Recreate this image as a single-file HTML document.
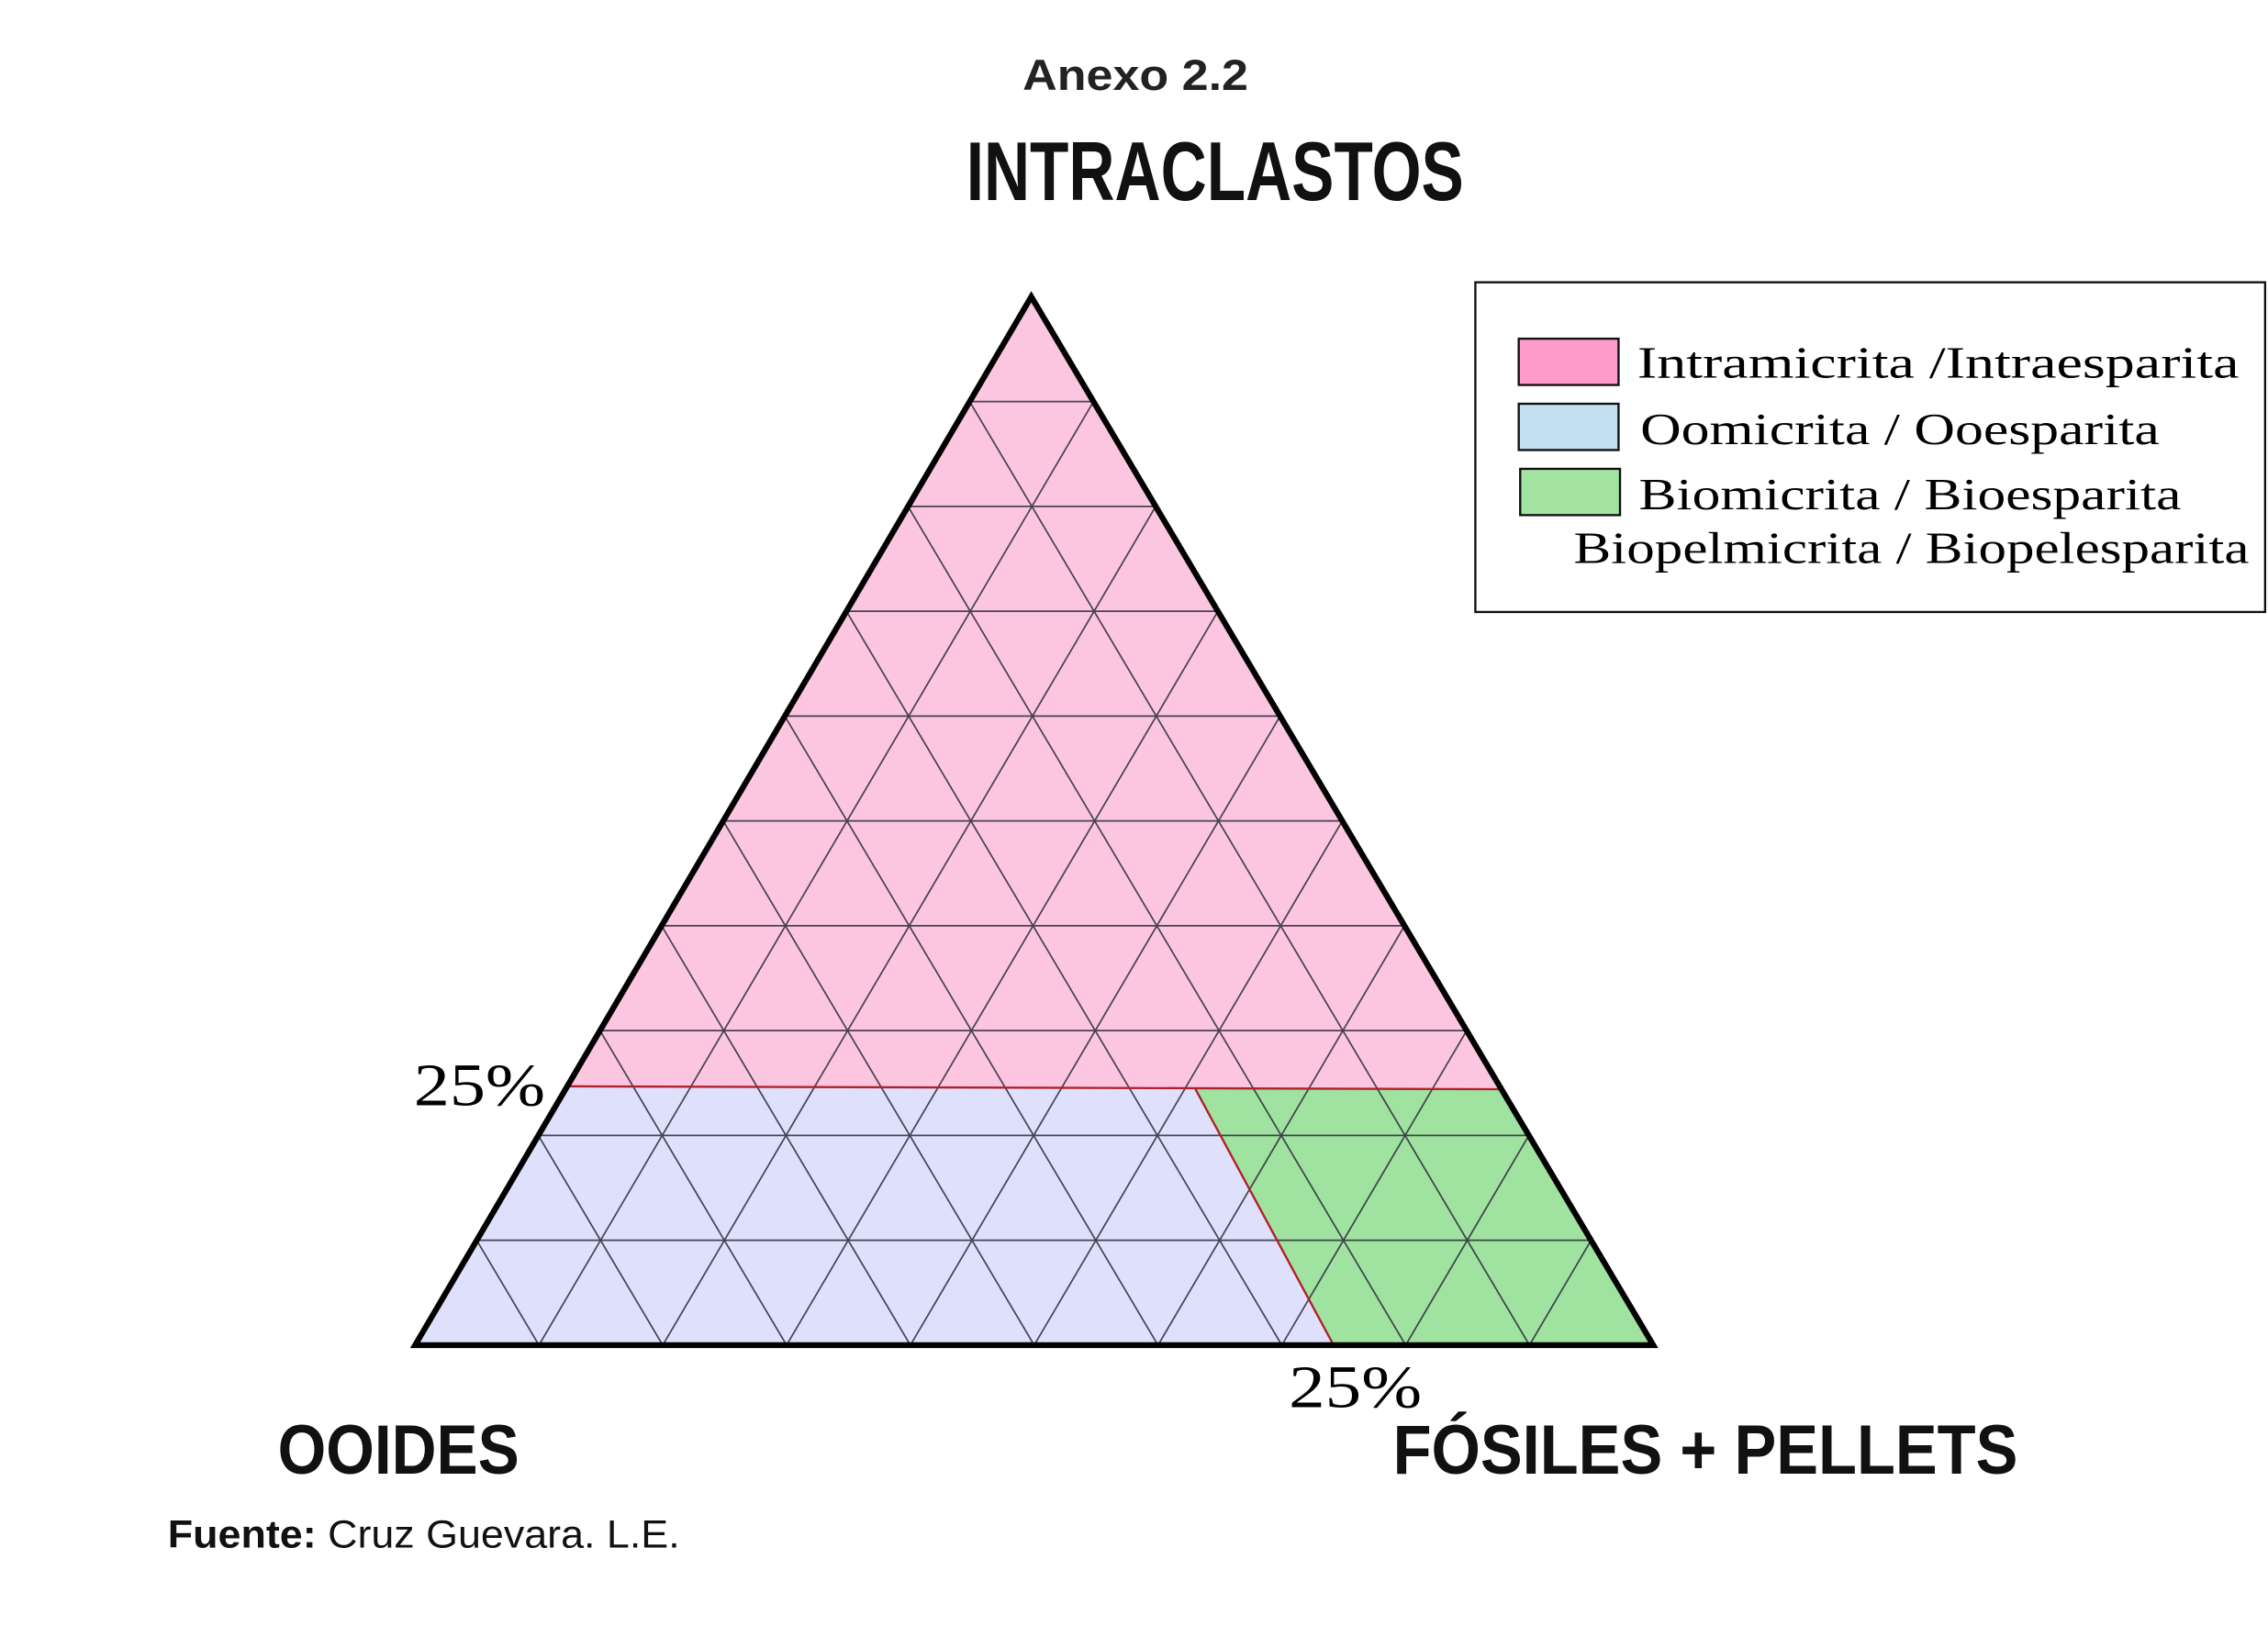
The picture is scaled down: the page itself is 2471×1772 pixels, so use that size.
<!DOCTYPE html>
<html><head><meta charset="utf-8"><style>html,body{margin:0;padding:0;background:#fff}svg{display:block}</style></head>
<body>
<svg width="2471" height="1772" viewBox="0 0 1568 1124" xmlns="http://www.w3.org/2000/svg">
<rect width="1568" height="1124" fill="#fff"/>
<text x="785" y="62" text-anchor="middle" font-family="Liberation Sans, sans-serif" font-weight="bold" font-size="30" fill="#222" textLength="156" lengthAdjust="spacingAndGlyphs">Anexo 2.2</text>
<text x="668" y="138" font-family="Liberation Sans, sans-serif" font-weight="bold" font-size="58" fill="#111" textLength="344" lengthAdjust="spacingAndGlyphs">INTRACLASTOS</text>
<polygon points="713,205 392,751 1036,753" fill="#fcc6e1"/>
<polygon points="392,751 826,752 922,930 287,930" fill="#dfe0fb"/>
<polygon points="826,752 1036,753 1143,930 922,930" fill="#a0e2a0"/>
<g stroke="#2a2a3a" stroke-width="1.1" opacity="0.85">
<line x1="329.6" y1="857.5" x2="1100" y2="857.5"/>
<line x1="372.2" y1="785" x2="1057" y2="785"/>
<line x1="414.8" y1="712.5" x2="1014" y2="712.5"/>
<line x1="457.4" y1="640" x2="971" y2="640"/>
<line x1="500" y1="567.5" x2="928" y2="567.5"/>
<line x1="542.6" y1="495" x2="885" y2="495"/>
<line x1="585.2" y1="422.5" x2="842" y2="422.5"/>
<line x1="627.8" y1="350" x2="799" y2="350"/>
<line x1="670.4" y1="277.5" x2="756" y2="277.5"/>
<line x1="372.6" y1="930" x2="329.6" y2="857.5"/>
<line x1="458.2" y1="930" x2="372.2" y2="785"/>
<line x1="543.8" y1="930" x2="414.8" y2="712.5"/>
<line x1="629.4" y1="930" x2="457.4" y2="640"/>
<line x1="715" y1="930" x2="500" y2="567.5"/>
<line x1="800.6" y1="930" x2="542.6" y2="495"/>
<line x1="886.2" y1="930" x2="585.2" y2="422.5"/>
<line x1="971.8" y1="930" x2="627.8" y2="350"/>
<line x1="1057.4" y1="930" x2="670.4" y2="277.5"/>
<line x1="372.6" y1="930" x2="756" y2="277.5"/>
<line x1="458.2" y1="930" x2="799" y2="350"/>
<line x1="543.8" y1="930" x2="842" y2="422.5"/>
<line x1="629.4" y1="930" x2="885" y2="495"/>
<line x1="715" y1="930" x2="928" y2="567.5"/>
<line x1="800.6" y1="930" x2="971" y2="640"/>
<line x1="886.2" y1="930" x2="1014" y2="712.5"/>
<line x1="971.8" y1="930" x2="1057" y2="785"/>
<line x1="1057.4" y1="930" x2="1100" y2="857.5"/>
</g>
<g stroke="#b0202a" stroke-width="1.5" fill="none">
<line x1="392" y1="751" x2="1036" y2="753"/>
<line x1="826" y1="752" x2="922" y2="930"/>
</g>
<polygon points="713,205 287,930 1143,930" fill="none" stroke="#000" stroke-width="4" stroke-linejoin="miter"/>
<text x="286" y="764" font-family="Liberation Serif, serif" font-size="42" fill="#000" textLength="91" lengthAdjust="spacingAndGlyphs">25%</text>
<text x="891" y="973" font-family="Liberation Serif, serif" font-size="42" fill="#000" textLength="92" lengthAdjust="spacingAndGlyphs">25%</text>
<text x="192" y="1019" font-family="Liberation Sans, sans-serif" font-weight="bold" font-size="48" fill="#111" textLength="167" lengthAdjust="spacingAndGlyphs">OOIDES</text>
<text x="963" y="1019" font-family="Liberation Sans, sans-serif" font-weight="bold" font-size="48" fill="#111" textLength="432" lengthAdjust="spacingAndGlyphs">FÓSILES + PELLETS</text>
<text x="116" y="1070" font-family="Liberation Sans, sans-serif" font-size="27" fill="#111" textLength="354" lengthAdjust="spacingAndGlyphs"><tspan font-weight="bold">Fuente:</tspan> Cruz Guevara. L.E.</text>
<rect x="1020" y="195" width="546" height="228" fill="#fff" stroke="#111" stroke-width="1.5"/>
<rect x="1050" y="234" width="69" height="32" fill="#fe9bcb" stroke="#111" stroke-width="1.5"/>
<rect x="1050" y="279" width="69" height="32" fill="#c3dff1" stroke="#111" stroke-width="1.5"/>
<rect x="1051" y="324" width="69" height="32" fill="#a4e4a2" stroke="#111" stroke-width="1.5"/>
<g font-family="Liberation Serif, serif" font-size="31" fill="#000">
<text x="1132" y="261" textLength="416" lengthAdjust="spacingAndGlyphs">Intramicrita /Intraesparita</text>
<text x="1134" y="307" textLength="359" lengthAdjust="spacingAndGlyphs">Oomicrita / Ooesparita</text>
<text x="1133" y="352" textLength="375" lengthAdjust="spacingAndGlyphs">Biomicrita / Bioesparita</text>
<text x="1088" y="389" textLength="467" lengthAdjust="spacingAndGlyphs">Biopelmicrita / Biopelesparita</text>
</g>
</svg>
</body></html>
